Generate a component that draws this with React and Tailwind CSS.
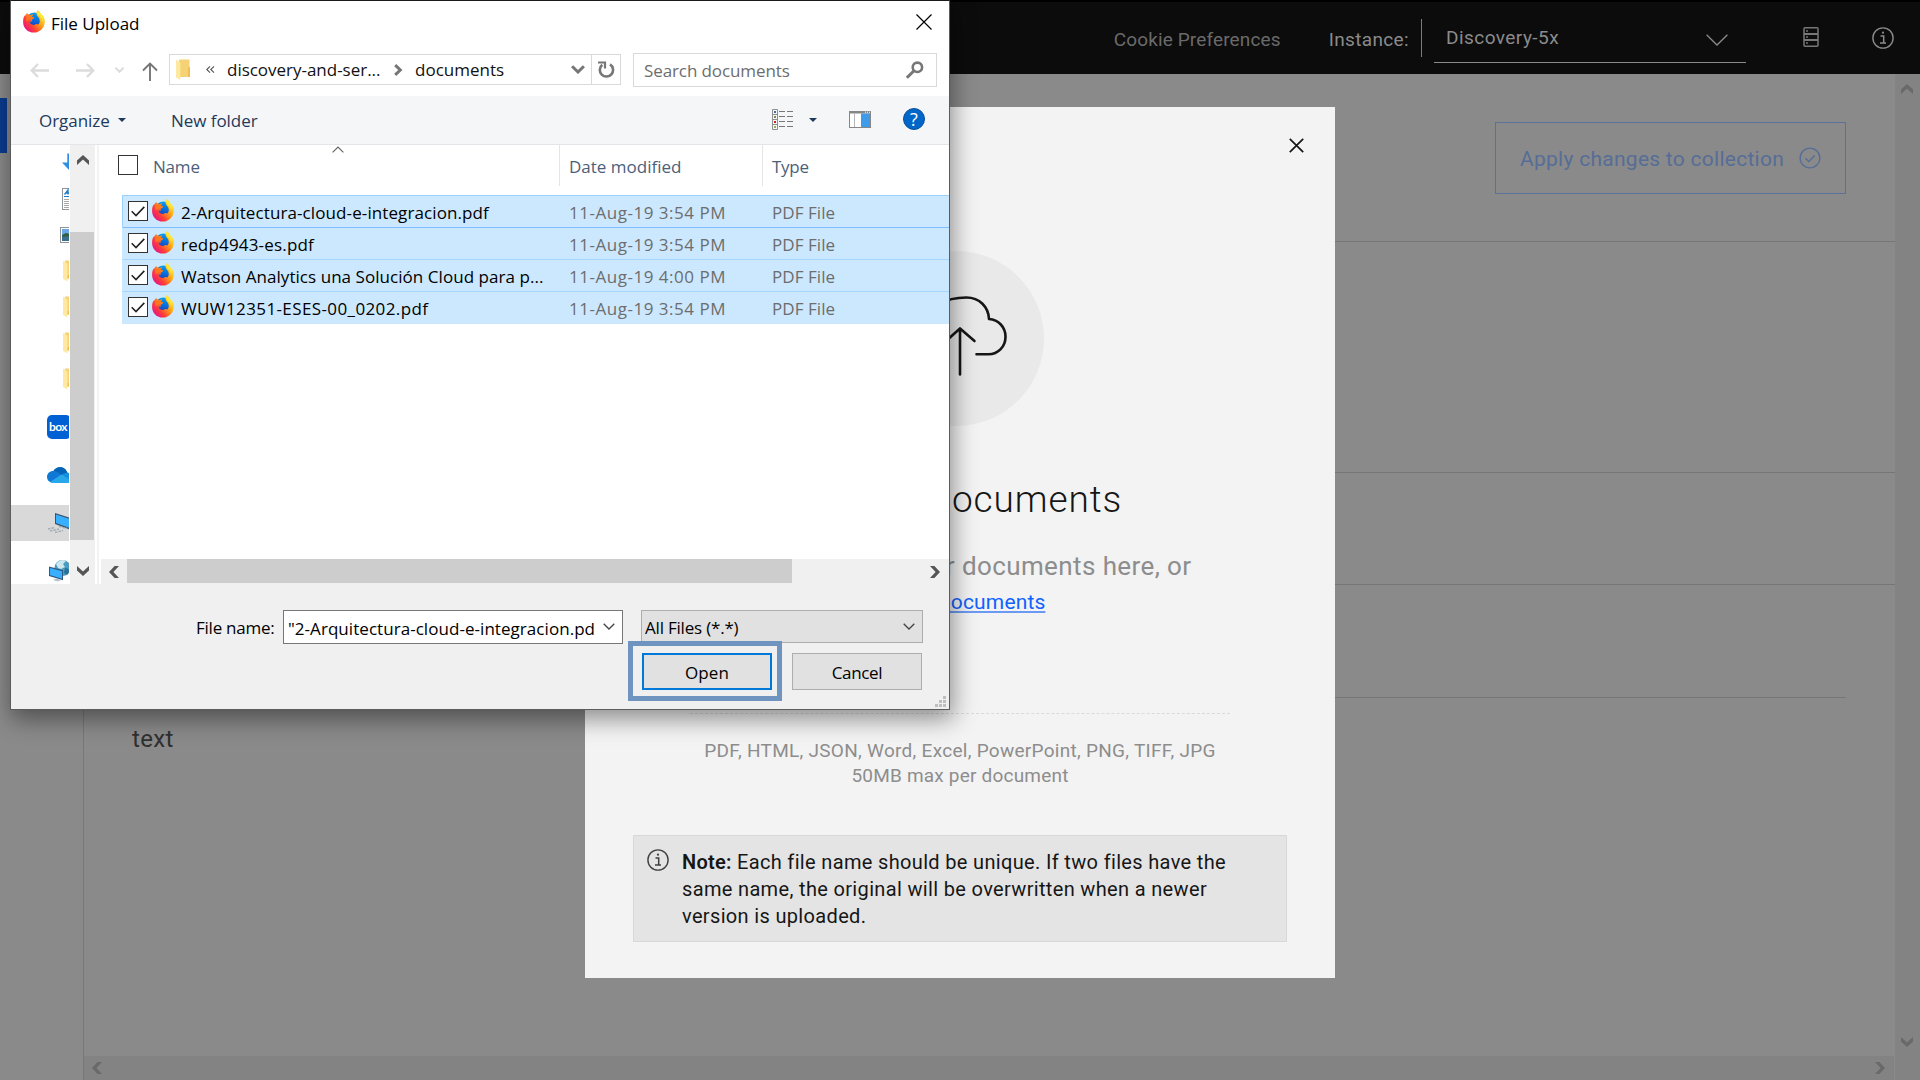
import React from "react";

const SEGOE = "font-['Open_Sans','Noto_Sans',sans-serif] text-[17px]";

const files = [
  { name: "2-Arquitectura-cloud-e-integracion.pdf", track: "tracking-[0.1px]", date: "11-Aug-19 3:54 PM" },
  { name: "redp4943-es.pdf", track: "tracking-[0.18px]", date: "11-Aug-19 3:54 PM" },
  { name: "Watson Analytics una Solución Cloud para p...", track: "tracking-[0.05px]", date: "11-Aug-19 4:00 PM" },
  { name: "WUW12351-ESES-00_0202.pdf", track: "tracking-[0.39px]", date: "11-Aug-19 3:54 PM" },
];

function Firefox({ id }) {
  return (
    <svg viewBox="0 0 22 23" className="h-[23px] w-[22px] shrink-0">
      <defs>
        <linearGradient id={`${id}-body`} x1="0.95" y1="0.1" x2="0.1" y2="0.85">
          <stop offset="0" stopColor="#fff44f" />
          <stop offset="0.28" stopColor="#ffc21f" />
          <stop offset="0.5" stopColor="#ff8a1a" />
          <stop offset="0.75" stopColor="#ff3a3c" />
          <stop offset="1" stopColor="#e31587" />
        </linearGradient>
        <linearGradient id={`${id}-globe`} x1="0.6" y1="0" x2="0.4" y2="1">
          <stop offset="0" stopColor="#00a3f5" />
          <stop offset="0.55" stopColor="#0a62d8" />
          <stop offset="1" stopColor="#3b1d9c" />
        </linearGradient>
      </defs>
      <circle cx="11.3" cy="11" r="8.6" fill={`url(#${id}-globe)`} />
      <path
        d="M15 .4c1.5.9 2.2 2 2.6 3.3 3 1.8 4.4 5 4.2 8.3-.3 6-5 10.6-10.9 10.6C4.8 22.6.1 17.9.1 11.9c0-2.7.5-4.8 1.4-6.6L1.9 6.500c.6-1.600 1.500-2.800 2.500-3.400L4.300 4.700c1.200-.3 2.400-.1 3.300.6.9-.7 2-1 2.900-.8-.9.7-1.500 1.500-1.500 2.500l1.900.3c.4.6-.3 1.300-2 2.100-.3 1 .1 1.900-.4 2.400-.8.1-1.300-.1-2-.2.3 2.400 2.400 3.600 4.500 3.300 1.300-.2 2-1 3.200-.8.5.1.6.5.2.9.9-.3 1.900-1.300 2.200-2.700.4-2.200-.2-3.700-1.300-5.100-1.200-1.500-2.300-3-1.700-5.200.2-.8.7-1.600 1.400-2.300z"
        fill={`url(#${id}-body)`}
      />
      <path d="M15 .4c1.500.9 2.200 2 2.600 3.300 2.800 2.300 3 5.300 2 8.300-.3-3-1.900-4.600-3.500-6.100C14.500 4.400 13.600 2.300 15 .4z" fill="#ffe838" />
      <path d="M4.400 3.100 4.300 4.700c1.200-.3 2.400-.1 3.300.6.9-.7 2-1 2.900-.8-.9.7-1.500 1.500-1.500 2.500l1.900.3c.4.6-.3 1.300-2 2.100C6.500 9 4.700 9.800 3.800 11.800 2.600 9 3 5.600 4.400 3.100z" fill="#ff7a1e" opacity="0.85" />
    </svg>
  );
}

function FolderHalf({ className }) {
  return (
    <svg viewBox="0 0 14 21" className={className}>
      <path d="M3 .5h10.500v17.500H4z" fill="#f5d273" />
      <path d="M12 8h2v10h-2z" fill="#eebf52" />
      <path d="M0 .5l4.300 3.200V21L0 18.500z" fill="#ffe9a2" />
    </svg>
  );
}

/* Thick pixel-style arrow used by the scroll bars; points up by default. */
function ScrollArrow({ className }) {
  return (
    <svg viewBox="0 0 12 10" className={`h-[10px] w-[12px] ${className}`}>
      <path d="M6 0l6 5.600V10L6 4.400 0 10V5.600z" fill="currentColor" />
    </svg>
  );
}

function Chevron({ className }) {
  return (
    <svg viewBox="0 0 12 7" className={`h-[7px] w-[12px] ${className}`} fill="none" stroke="#444" strokeWidth="1.3">
      <path d="M.7.7 6 6 11.300.7" />
    </svg>
  );
}

function Info({ className }) {
  return (
    <svg viewBox="0 0 22 22" className={className}>
      <circle cx="11" cy="11" r="10.1" fill="none" stroke="currentColor" strokeWidth="1.4" />
      <circle cx="11" cy="5.7" r="1.1" fill="currentColor" />
      <path d="M8.500 9.100h3.200v6.800M8 16h6" fill="none" stroke="currentColor" strokeWidth="1.5" />
    </svg>
  );
}

function Header() {
  return (
    <header className="flex h-[74px] shrink-0 items-start justify-end border-t-2 border-black bg-[#0c0c0c] text-[19px] leading-[30px] text-[#8b8b8b]">
      <span className="mt-[23px] mr-[48px] tracking-[0.13px] text-[#6a6a6a]">Cookie Preferences</span>
      <span className="mt-[23px] mr-[12px] tracking-[0.36px]">Instance:</span>
      <span className="mt-[17px] mr-[12px] h-[38px] w-px bg-[#7c7c7c]" />
      <div className="flex h-[61px] w-[312px] items-start justify-between border-b border-[#8b8b8b] pr-[18px] pl-[12px]">
        <span className="mt-[21px] tracking-[0.45px]">Discovery-5x</span>
        <svg viewBox="0 0 22 12" className="mt-[32px] h-[12px] w-[22px]" fill="none" stroke="#8b8b8b" strokeWidth="1.3">
          <path d="M.6.8 11 11 21.400.8" />
        </svg>
      </div>
      <svg viewBox="0 0 16 20" className="mt-[25px] ml-[57px] h-[20px] w-[16px]" fill="none" stroke="#777">
        <rect x="1" y=".8" width="14" height="18.4" rx="1" strokeWidth="1.5" />
        <path d="M1 7h14M1 13h14" strokeWidth="1.9" />
        <path d="M4 3v2M4 9v2M4 15v2" strokeWidth="1.4" />
      </svg>
      <Info className="mt-[25px] mr-[26px] ml-[53px] h-[22px] w-[22px]" />
    </header>
  );
}

function Page() {
  return (
    <div className="flex min-h-0 flex-1 bg-[#8a8a8a]">
      <aside className="w-[84px] shrink-0 border-r border-[#777] pt-[24px]">
        <div className="h-[55px] w-[7px] bg-[#0b3b8f]" />
      </aside>
      <div className="flex min-w-0 flex-1 flex-col">
        <main className="flex flex-1 flex-col">
          <div className="flex h-[168px] items-start justify-end border-b border-[#767676] pt-[48px] pr-[49px]">
            <button className="flex h-[72px] w-[351px] items-center border border-[#5a7199] pl-[24px] text-[21px] tracking-[0.27px] text-[#566d97]">
              <span className="mt-[3px] w-[279px] text-left">Apply changes to collection</span>
              <svg viewBox="0 0 22 22" className="h-[22px] w-[22px]" fill="none" stroke="currentColor" strokeWidth="1.4">
                <circle cx="11" cy="11" r="9.9" />
                <path d="M6.500 11.300l3.200 3.100 6-6" />
              </svg>
            </button>
          </div>
          <div className="h-[231px] border-b border-[#767676]" />
          <div className="h-[112px] border-b border-[#767676]" />
          <div className="mr-[49px] ml-[48px] h-[113px] border-b border-[#767676]" />
          <p className="mt-[26px] ml-[48px] text-[24px] leading-[30px] tracking-[0.35px] text-[#303030]">text</p>
        </main>
        <div className="mr-px flex h-[24px] items-center justify-between bg-[#838383] pr-[8px] pl-[7px] text-[#696969]">
          <ScrollArrow className="-rotate-90" />
          <ScrollArrow className="rotate-90" />
        </div>
      </div>
      <div className="flex w-[25px] shrink-0 flex-col items-center justify-between bg-[#838383] pt-[10px] pr-px pb-[33px] text-[#696969]">
        <ScrollArrow />
        <ScrollArrow className="rotate-180" />
      </div>
    </div>
  );
}

function Modal() {
  return (
    <section className="absolute top-[107px] left-[585px] flex h-[871px] w-[750px] flex-col items-center bg-[#f3f3f3]">
      <div className="flex h-[144px] w-full items-start justify-end pt-[31px] pr-[31px]">
        <svg viewBox="0 0 15 15" className="h-[15px] w-[15px]" stroke="#161616" strokeWidth="1.7">
          <path d="M.8.8l13.400 13.400M14.200.8.8 14.200" />
        </svg>
      </div>
      <div className="mr-[7px] flex h-[175px] w-[175px] shrink-0 items-start justify-center rounded-full bg-[#e9e9e9] pt-[43px] pl-[7px]">
        <svg viewBox="0 0 96 84" className="h-[84px] w-[96px]" fill="none" stroke="#161616" strokeWidth="2.6" strokeLinecap="round" strokeLinejoin="round">
          <path d="M33 60.300H19.500C9.500 60.300 1.700 52.500 1.700 43S9 25.800 18.500 25.300C20 13 31 3.500 54.500 3.500C67.500 3.500 76.500 13 77 25C86.500 25.800 93.500 33 93.500 42.700S86.300 60.300 76.500 60.300H64.500" />
          <path d="M48 80.500V34.500M34 47 48 34.500 62.500 47" />
        </svg>
      </div>
      <h1 className="mt-[52px] pl-[3px] text-[37px] leading-[44px] font-light tracking-[0.9px] whitespace-nowrap text-[#161616]">Upload documents</h1>
      <p className="mt-[29px] text-[26px] leading-[30px] tracking-[0.4px] text-[#8d8d8d]">Drag and drop your documents here, or</p>
      <a className="mt-[7px] ml-[2px] text-[21px] leading-[28px] tracking-[0.14px] text-[#0f62fe] underline decoration-[#6b9af5] decoration-2 underline-offset-[2px]">select documents</a>
      <div className="mt-[97px] w-[540px] border-t border-dashed border-[#dadada]" />
      <p className="mt-[24px] text-center text-[19px] leading-[25px] tracking-[0.28px] whitespace-nowrap text-[#8d8d8d]">
        PDF, HTML, JSON, Word, Excel, PowerPoint, PNG, TIFF, JPG
      </p>
      <p className="text-center text-[19px] leading-[25px] tracking-[0.2px] text-[#8d8d8d]">50MB max per document</p>
      <div className="mt-[47px] flex h-[107px] w-[654px] items-start border border-[#d8d8d8] bg-[#e4e4e4] pt-[13px] pl-[13px] text-[#161616]">
        <Info className="h-[22px] w-[22px] text-[#404040]" />
        <p className="ml-[13px] text-[20px] leading-[27px] tracking-[0.34px] whitespace-nowrap">
          <span className="font-semibold tracking-[0.25px]">Note:</span> Each file name should be unique. If two files have the
          <br />
          same name, the original will be overwritten when a newer
          <br />
          version is uploaded.
        </p>
      </div>
    </section>
  );
}

function AddressBar() {
  return (
    <div className="flex h-[52px] items-center text-[#111]">
      <svg viewBox="0 0 19 15" className="ml-[19px] h-[15px] w-[19px]" fill="none" stroke="#dcdcdc" strokeWidth="2.4">
        <path d="M19 7.500H2M8 1 1.700 7.500 8 14" />
      </svg>
      <svg viewBox="0 0 19 15" className="ml-[27px] h-[15px] w-[19px]" fill="none" stroke="#dcdcdc" strokeWidth="2.4">
        <path d="M0 7.500h17M11 1l6.300 6.500L11 14" />
      </svg>
      <svg viewBox="0 0 9 6" className="ml-[20px] h-[6px] w-[9px]" fill="none" stroke="#dcdcdc" strokeWidth="2">
        <path d="M.5.8l4 4 4-4" />
      </svg>
      <svg viewBox="0 0 16 19" className="mt-[2px] ml-[18px] h-[19px] w-[16px]" fill="none" stroke="#767676" strokeWidth="1.9">
        <path d="M8 19V1.500M1 8.500l7-7 7 7" />
      </svg>
      <div className="-mt-px ml-[11px] flex h-[31px] w-[452px] items-center border border-[#d9d9d9] bg-white">
        <FolderHalf className="ml-[6px] h-[21px] w-[14px]" />
        <svg viewBox="0 0 9 7" className="ml-[16px] h-[7px] w-[9px]" fill="none" stroke="#555" strokeWidth="1.1">
          <path d="M4 .4.800 3.500 4 6.600M8 .4 4.800 3.500 8 6.600" />
        </svg>
        <span className="ml-[12px] w-[167px] leading-[29px] tracking-[-0.02px]">discovery-and-ser...</span>
        <svg viewBox="0 0 9 12" className="h-[12px] w-[9px]" fill="none" stroke="#767676" strokeWidth="3">
          <path d="M1.200 1.200 6.300 6l-5.100 4.800" />
        </svg>
        <span className="ml-[12px] w-[156px] leading-[29px]">documents</span>
        <svg viewBox="0 0 14 9" className="h-[9px] w-[14px]" fill="none" stroke="#767676" strokeWidth="3">
          <path d="M1.100 1.200 7 7l5.900-5.800" />
        </svg>
        <span className="ml-[6px] h-[29px] w-px bg-[#d9d9d9]" />
        <svg viewBox="0 0 17 17" className="ml-[6px] h-[17px] w-[17px]" fill="none" stroke="#767676" strokeWidth="2.6">
          <path d="M12 3.400A6.600 6.600 0 1 1 4.300 3.800" />
          <path d="M0 1.500h7v6" strokeWidth="2.2" />
        </svg>
      </div>
      <div className="ml-[12px] flex h-[34px] w-[304px] items-center justify-between border border-[#d9d9d9] pr-[12px] pl-[10px] text-[#6d6d6d]">
        <span className="mt-[2px] tracking-[-0.1px]">Search documents</span>
        <svg viewBox="0 0 18 18" className="h-[18px] w-[18px]" fill="none" stroke="#767676">
          <circle cx="11.4" cy="6.3" r="4.7" strokeWidth="2.6" />
          <path d="M8 9.700.900 16.800" strokeWidth="3" />
        </svg>
      </div>
    </div>
  );
}

function Toolbar() {
  return (
    <div className="flex h-[49px] items-center border-b border-[#e3e5e8] bg-[#f5f6f7] text-[#1e395b]">
      <span className="mt-[2px] ml-[28px] w-[79px] tracking-[-0.05px]">Organize</span>
      <span className="h-0 w-0 border-x-4 border-t-4 border-x-transparent border-t-[#1e395b]" />
      <span className="mt-[2px] ml-[45px] flex-1 tracking-[-0.05px]">New folder</span>
      <svg viewBox="0 0 21 21" className="-mt-px h-[21px] w-[21px]" fill="none">
        <path d="M.5.500h5v20h-5zM.5 5.500h5M.5 10.500h5M.5 15.500h5" stroke="#8e8e8e" />
        <path d="M7 2.500h6m2 0h6M7 7.500h6m2 0h6M7 12.500h6m2 0h6M7 17.500h6m2 0h6" stroke="#777" />
        <path d="M2 2h2v2H2z" fill="#3d6ea8" />
        <path d="M2 7h2v2H2z" fill="#7a8a4a" />
        <path d="M2 12h2v2H2z" fill="#d02020" />
        <path d="M2 17h2v2H2z" fill="#8cb060" />
      </svg>
      <span className="ml-[16px] h-0 w-0 border-x-4 border-t-4 border-x-transparent border-t-[#1e395b]" />
      <svg viewBox="0 0 22 17" className="-mt-px ml-[32px] h-[17px] w-[22px]">
        <rect x=".5" y=".5" width="21" height="16" fill="#fff" stroke="#868686" />
        <path d="M0 0h22v2.500H0z" fill="#868686" />
        <path d="M5.500 2v14" stroke="#b5b5b5" />
        <rect x="12" y="2.5" width="9" height="13.5" fill="#3f9be8" />
        <path d="M16 1.200h1m1 0h1m1 0h1" stroke="#fff" />
      </svg>
      <span className="-mt-[2px] mr-[24px] ml-[32px] flex h-[22px] w-[22px] items-center justify-center rounded-full border border-[#0a4f9c] bg-[#0067c8] text-[18px] leading-none text-white">?</span>
    </div>
  );
}

function NavIcon({ kind }) {
  const base = "h-[24px] w-[24px] shrink-0";
  if (kind === "down")
    return (
      <svg viewBox="0 0 24 24" className={base}>
        <path d="M7.300 2.500h6v9h5.300L10.300 20.500 2 11.500h5.300z" fill="#2f8fe0" />
      </svg>
    );
  if (kind === "doc")
    return (
      <svg viewBox="0 0 24 24" className={base}>
        <rect x="2.5" y="1.5" width="17" height="21" fill="#fff" stroke="#8e9499" />
        <path d="M4.500 7.500 8 3v4.500M6 6h3" stroke="#1b7fcb" strokeWidth="1.3" fill="none" />
        <path d="M4 9.500h14" stroke="#1b7fcb" />
        <path d="M4 12.500h14M4 14.500h14M4 16.500h14M4 18.500h14M4 20.500h14" stroke="#a9a9a9" />
      </svg>
    );
  if (kind === "pic")
    return (
      <svg viewBox="0 0 24 24" className={base}>
        <rect x=".5" y="4.5" width="23" height="15" fill="#fff" stroke="#8e9499" />
        <path d="M2 6h20v6H2z" fill="#6aa7e8" />
        <path d="M2 12l4-2 4 1 12 1v2H2z" fill="#2f5f3d" />
        <path d="M2 13.500h20V18H2z" fill="#3c6f8c" />
      </svg>
    );
  if (kind === "folder")
    return (
      <svg viewBox="0 0 24 24" className={base}>
        <path d="M5 1.500h14v18H6z" fill="#f5d273" />
        <path d="M7 16h4v3.500H7z" fill="#eebf52" />
        <path d="M3 1.500l4.500 3.200v17.800L3 20z" fill="#ffe9a2" />
      </svg>
    );
  if (kind === "onedrive")
    return (
      <svg viewBox="0 0 24 24" className={base}>
        <path d="M6 8.500C7.500 5.500 10 4 13 4c4 0 6.500 2.600 7.500 6l-6 3z" fill="#0364b8" />
        <path d="M4.500 19.500C2 19 0 17 0 14c0-3.400 2.500-6 6.500-6 3 0 5 1.600 8.500 4z" fill="#0f78d4" />
        <path d="M14.500 11.500 20 9.500c2.500.5 4 2.500 4 5l-2 4z" fill="#1490df" />
        <path d="M3 19 14 11.800 24 17v2.500q-1 .5-3 .5H6q-2 0-3-1z" fill="#28a8ea" />
      </svg>
    );
  if (kind === "pc")
    return (
      <svg viewBox="0 0 24 24" className={base}>
        <path d="M8 2l16 5v12L8 13z" fill="#3a5368" />
        <path d="M9 3.500l15 5v9L9 12z" fill="#38b0ff" />
        <path d="M1 18l7-1.500M3 20l9-2M8 21.500l8-2M12 15.500l8 2" stroke="#a3adb5" strokeWidth="1.4" strokeDasharray="2.5 1" />
      </svg>
    );
  return (
    <svg viewBox="0 0 24 24" className={base}>
      <circle cx="15.5" cy="9" r="8" fill="#4b9cc0" />
      <path d="M9 5c3-4 7-5 10-3l-3 3 2 3-4 2-3-1z" fill="#cde7ee" />
      <path d="M18 9c2 0 4 1 5 3l-3 4-3-2z" fill="#2a7299" />
      <path d="M2 7.500l14 3.700v10L2 17z" fill="#2f5a80" />
      <path d="M3 9l12 3.300v7.400L3 16z" fill="#38b0ff" />
      <path d="M6 21l3-1.500 5 1.500-3 1.500z" fill="#b8c2c9" />
    </svg>
  );
}

function NavPane() {
  return (
    <div className="flex w-[58px] shrink-0 flex-col overflow-hidden">
      {["down", "doc", "pic", "folder", "folder", "folder", "folder"].map((k, i) => (
        <div key={i} className="flex h-[36px] shrink-0 items-center pl-[49px]">
          <NavIcon kind={k} />
        </div>
      ))}
      <div className="mt-[12px] flex h-[36px] shrink-0 items-center pl-[36px]">
        <span className="flex h-[24px] w-[24px] shrink-0 items-center rounded-[5px] bg-[#0061d5] pl-[2px] font-[Lato,sans-serif] text-[12px] leading-none font-bold tracking-[-0.6px] text-white">
          box
        </span>
      </div>
      {["onedrive", "pc", "network"].map((k) => (
        <div key={k} className={`mt-[12px] flex h-[36px] shrink-0 items-center pl-[36px] ${k === "pc" ? "bg-[#d9d9d9]" : ""}`}>
          <NavIcon kind={k} />
        </div>
      ))}
    </div>
  );
}

function FileList() {
  return (
    <div className="ml-[2px] flex flex-1 flex-col">
      <div className="relative flex h-[41px] items-start leading-[43px] text-[#4c607a]">
        <span className="mt-[10px] ml-[17px] h-[20px] w-[20px] border border-[#333] bg-white" />
        <span className="ml-[15px] w-[405px] tracking-[-0.2px]">Name</span>
        <span className="ml-px h-full w-px bg-[#e5e5e5]" />
        <span className="w-[202px] pl-[9px]">Date modified</span>
        <span className="h-full w-px bg-[#e5e5e5]" />
        <span className="pl-[9px] tracking-[-0.3px]">Type</span>
        <svg viewBox="0 0 12 7" className="absolute top-[1px] left-[231px] h-[7px] w-[12px]" fill="none" stroke="#666" strokeWidth="1.2">
          <path d="M.6 6.400 6 1l5.400 5.400" />
        </svg>
      </div>
      <div className="mt-[9px] ml-[21px] flex flex-col bg-[#cce8ff]">
        {files.map((f, i) => (
          <div
            key={f.name}
            className={`flex items-start border-t leading-[24px] ${i === 0 ? "h-[32px] border-l border-[#99d1ff]" : i === 1 ? "h-[32px] border-l border-t-[#7abfff] border-l-[#cce8ff]" : i === 2 ? "h-[32px] border-l border-t-[#a5d6ff] border-l-[#cce8ff]" : "h-[33px] border-l border-t-[#a5d6ff] border-l-[#cce8ff]"}`}
          >
            <span className="mt-[5px] ml-[5px] flex h-[20px] w-[20px] items-center justify-center border border-[#333] bg-white">
              <svg viewBox="0 0 14 11" className="h-[11px] w-[14px]" fill="none" stroke="#222" strokeWidth="1.6">
                <path d="M.7 5.300 5 9.600 13.300.9" />
              </svg>
            </span>
            <span className="mt-[3px] ml-[4px]">
              <Firefox id={`row${i}`} />
            </span>
            <span className={`mt-[5px] ml-[7px] w-[388px] whitespace-nowrap text-black ${f.track}`}>{f.name}</span>
            <span className="mt-[5px] w-[203px] tracking-[0.52px] whitespace-nowrap text-[#6d6d6d]">{f.date}</span>
            <span className="mt-[5px] tracking-[0.06px] text-[#6d6d6d]">PDF File</span>
          </div>
        ))}
      </div>
      <div className="mt-auto flex h-[25px] items-center bg-[#f0f0f0] text-[#555]">
        <ScrollArrow className="ml-[7px] -rotate-90" />
        <span className="mb-px ml-[7px] h-[24px] w-[665px] bg-[#cdcdcd]" />
        <ScrollArrow className="mr-[8px] ml-auto rotate-90" />
      </div>
    </div>
  );
}

function FileDialog() {
  return (
    <section className={`absolute top-0 left-[10px] flex h-[710px] w-[940px] flex-col border border-[#5c5c5c] border-t-[#1a1a1a] bg-white shadow-[2px_8px_22px_1px_rgba(0,0,0,0.42)] ${SEGOE}`}>
      <div className="flex h-[43px] items-center pr-[17px] pl-[12px] text-black">
        <span className="-mt-[2px]">
          <Firefox id="title" />
        </span>
        <span className="mt-[2px] ml-[6px] flex-1">File Upload</span>
        <svg viewBox="0 0 16 16" className="-mt-px h-[16px] w-[16px]" stroke="#000" strokeWidth="1.2">
          <path d="M.5.5l15 15M15.500.5.5 15.500" />
        </svg>
      </div>
      <AddressBar />
      <Toolbar />
      <div className="flex h-[439px]">
        <NavPane />
        <div className="ml-px flex w-[25px] flex-col items-center bg-[#f0f0f0] text-[#555]">
          <ScrollArrow className="mt-[10px]" />
          <span className="mt-[67px] mr-px h-[308px] w-[24px] bg-[#cdcdcd]" />
          <ScrollArrow className="mt-[26px] rotate-180" />
        </div>
        <span className="ml-[2px] w-[2px] bg-[#f3f3f3]" />
        <FileList />
      </div>
      <div className="relative flex flex-1 flex-col bg-[#f0f0f0] pt-[26px] text-black">
        <div className="flex items-start">
          <span className="ml-[185px] w-[87px] leading-[36px] tracking-[-0.24px]">File name:</span>
          <div className="flex h-[34px] w-[340px] items-center border border-[#777] bg-white pl-[4px]">
            <span className="mt-[3px] w-[315px] tracking-[0.05px] whitespace-nowrap">"2-Arquitectura-cloud-e-integracion.pd</span>
            <Chevron className="-mt-px" />
          </div>
          <div className="ml-[18px] flex h-[33px] w-[282px] items-center justify-between border border-[#adadad] bg-[#e1e1e1] pr-[7px] pl-[3px]">
            <span className="mt-[2px] tracking-[-0.2px]">All Files (*.*)</span>
            <Chevron />
          </div>
        </div>
        <div className="mt-[7px] ml-[631px] flex gap-[20px]">
          <button className="relative flex h-[37px] w-[130px] items-center justify-center border-2 border-[#0078d7] bg-[#e1e1e1]">
            <span className="mt-[2px] tracking-[0.1px]">Open</span>
            <span className="absolute -top-[14px] -right-[12px] -bottom-[13px] -left-[16px] border-[5px] border-[#7094c0]" />
          </button>
          <button className="flex h-[37px] w-[130px] items-center justify-center border border-[#adadad] bg-[#e1e1e1]">
            <span className="mt-[2px] tracking-[-0.34px]">Cancel</span>
          </button>
        </div>
        <svg viewBox="0 0 11 11" className="absolute right-[3px] bottom-[2px] h-[11px] w-[11px]" fill="#bfbfbf">
          <path d="M8 0h3v3H8zM4 4h3v3H4zM8 4h3v3H8zM0 8h3v3H0zM4 8h3v3H4zM8 8h3v3H8z" />
        </svg>
      </div>
    </section>
  );
}

export default function App() {
  return (
    <div className="relative flex h-[1080px] w-[1920px] flex-col overflow-hidden font-[Roboto,sans-serif]">
      <Header />
      <Page />
      <Modal />
      <FileDialog />
    </div>
  );
}
